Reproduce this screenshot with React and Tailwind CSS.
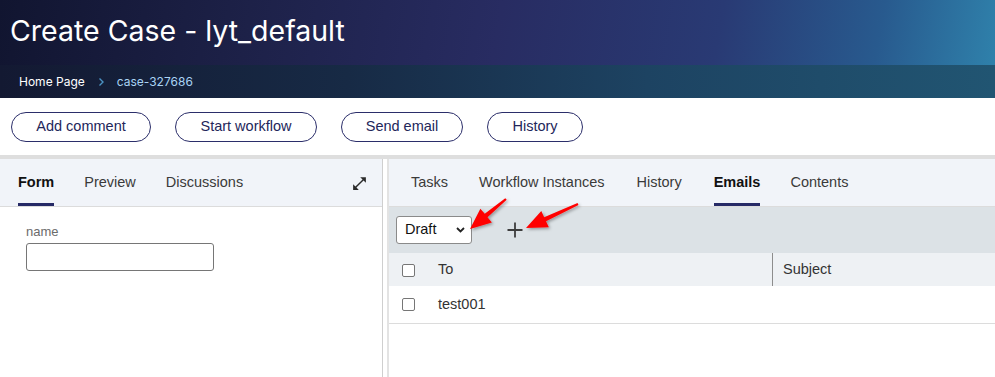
import React from 'react';

const actions = [
  { label: 'Add comment', w: 'w-[140px]' },
  { label: 'Start workflow', w: 'w-[142px]' },
  { label: 'Send email', w: 'w-[122px]' },
  { label: 'History', w: 'w-[96px]' },
];

const leftTabs = ['Form', 'Preview', 'Discussions'];
const rightTabs = [
  { label: 'Tasks', ml: '' },
  { label: 'Workflow Instances', ml: 'ml-[31px]' },
  { label: 'History', ml: 'ml-[32px]' },
  { label: 'Emails', ml: 'ml-[32px]' },
  { label: 'Contents', ml: 'ml-[30px]' },
];

// red annotation arrow, tail -> tip
const Arrow = ({ x1, y1, x2, y2 }) => {
  const dx = x2 - x1;
  const dy = y2 - y1;
  const len = Math.hypot(dx, dy);
  const ux = dx / len;
  const uy = dy / len;
  const nx = -uy;
  const ny = ux;
  const head = 21;
  const hw = 9;
  const sw = 2.2;
  const bx = x2 - ux * head;
  const by = y2 - uy * head;
  const pts = [
    [x1 + nx * sw * 0.5, y1 + ny * sw * 0.5],
    [bx + nx * sw, by + ny * sw],
    [bx + nx * hw, by + ny * hw],
    [x2, y2],
    [bx - nx * hw, by - ny * hw],
    [bx - nx * sw, by - ny * sw],
    [x1 - nx * sw * 0.5, y1 - ny * sw * 0.5],
  ]
    .map((p) => p.join(','))
    .join(' ');
  return <polygon points={pts} fill="#ff0000" filter="url(#shadow)" />;
};

const Checkbox = () => (
  <span className="block w-[13px] h-[13px] border border-[#767676] rounded-[2px] bg-white" />
);

const Tab = ({ label, active }) => (
  <div
    className={`h-full flex items-center pt-[4px] border-b-[3px] ${
      active ? 'border-[#262a66] font-bold text-[#111]' : 'border-transparent text-[#3a3a3a]'
    }`}
  >
    {label}
  </div>
);

export default function App() {
  return (
    <div className="relative w-[995px] h-[377px] overflow-hidden bg-white font-['Liberation_Sans',Arial,sans-serif] text-[14.5px]">
      {/* Title band */}
      <div className="h-[65px] flex items-center pl-[10px] bg-[linear-gradient(100deg,#111530_0%,#1d2148_25%,#282c62_50%,#293a74_72%,#285a8e_88%,#2f81ab_100%)]">
        <h1 className="text-white text-[28.5px] font-['Inter',sans-serif] -mt-[3px]">
          Create Case - lyt_default
        </h1>
      </div>

      {/* Breadcrumb */}
      <div className="h-[33px] flex items-center pl-[19px] text-[12px] font-['Inter',sans-serif] bg-[linear-gradient(90deg,#131932_0%,#172a45_35%,#1d4362_65%,#215572_100%)]">
        <span className="text-white">Home Page</span>
        <span className="ml-[13px] mr-[12px] text-[#4b93c4]">
          <svg width="7" height="10" viewBox="0 0 7 10" fill="none">
            <path d="M1.5 1.5 5 5l-3.5 3.5" stroke="currentColor" strokeWidth="1.4" />
          </svg>
        </span>
        <span className="text-[#a9d3f4]">case-327686</span>
      </div>

      {/* Actions */}
      <div className="h-[57px] flex items-center pl-[11px] gap-[24px]">
        {actions.map((a) => (
          <button
            key={a.label}
            className={`${a.w} h-[30px] rounded-full border border-[#2b2e6a] text-[#23265a] bg-white`}
          >
            {a.label}
          </button>
        ))}
      </div>

      <div className="h-[4px] bg-[#dedede]" />

      {/* Panels */}
      <div className="flex h-[218px]">
        {/* Left panel */}
        <div className="w-[383px] border-r border-[#cfcfcf] flex flex-col">
          <div className="h-[48px] bg-[#f1f4f9] border-b border-[#dcdcdc] flex items-stretch px-[18px] gap-[30px]">
            {leftTabs.map((t, i) => (
              <Tab key={t} label={t} active={i === 0} />
            ))}
            <div className="ml-auto -mr-[4px] flex items-center pt-[1px] text-[#2b2b2b]">
              <svg width="17" height="17" viewBox="0 0 24 24" fill="currentColor">
                <path d="M21 11V3h-8l3.29 3.29-10 10L3 13v8h8l-3.29-3.29 10-10z" />
              </svg>
            </div>
          </div>
          <div className="pl-[26px] pt-[15px]">
            <div className="text-[13px] text-[#6b6b6b]">name</div>
            <div className="mt-[1px] w-[188px] h-[28px] border border-[#767676] rounded-[3px]" />
          </div>
        </div>

        <div className="w-[4px] bg-white" />

        {/* Right panel */}
        <div className="flex-1 border-l-2 border-[#e3e3e3] flex flex-col">
          <div className="h-[48px] bg-[#f1f4f9] border-b border-[#dcdcdc] flex items-stretch pl-[22px]">
            {rightTabs.map((t) => (
              <div key={t.label} className={t.ml}>
                <Tab label={t.label} active={t.label === 'Emails'} />
              </div>
            ))}
          </div>

          <div className="h-[46px] bg-[#dce2e6] flex items-center pl-[7px]">
            <div className="w-[76px] h-[28px] bg-white border border-[#8a8a8a] rounded-[3px] flex items-center justify-between pl-[8px] pr-[6px] text-[#111]">
              <span>Draft</span>
              <svg width="9" height="6" viewBox="0 0 9 6" fill="none">
                <path d="M1 1l3.5 3.5L8 1" stroke="#222" strokeWidth="1.8" />
              </svg>
            </div>
            <div className="ml-[35px] text-[#3d3d3d]">
              <svg width="16" height="16" viewBox="0 0 16 16" fill="none">
                <path d="M8 0.5v15M0.5 8h15" stroke="currentColor" strokeWidth="1.8" />
              </svg>
            </div>
          </div>

          <div className="h-[33px] bg-[#eef1f4] flex items-stretch">
            <div className="w-[384px] flex items-center pl-[13px] pt-[1px] border-r border-[#8d8d8d] text-[#333]">
              <Checkbox />
              <span className="ml-[23px]">To</span>
            </div>
            <div className="flex items-center pl-[10px] pt-[1px] text-[#333]">Subject</div>
          </div>

          <div className="h-[38px] flex items-center pl-[13px] border-b border-[#dcdcdc] text-[#333]">
            <Checkbox />
            <span className="ml-[23px]">test001</span>
          </div>
        </div>
      </div>

      {/* Annotation arrows */}
      <svg className="absolute inset-0 pointer-events-none" width="995" height="377">
        <defs>
          <filter id="shadow" x="-30%" y="-30%" width="160%" height="160%">
            <feDropShadow dx="1.5" dy="1.5" stdDeviation="1.5" floodColor="#000" floodOpacity="0.35" />
          </filter>
        </defs>
        <Arrow x1={506} y1={199} x2={470} y2={229} />
        <Arrow x1={578} y1={204} x2={526} y2={228} />
      </svg>
    </div>
  );
}
